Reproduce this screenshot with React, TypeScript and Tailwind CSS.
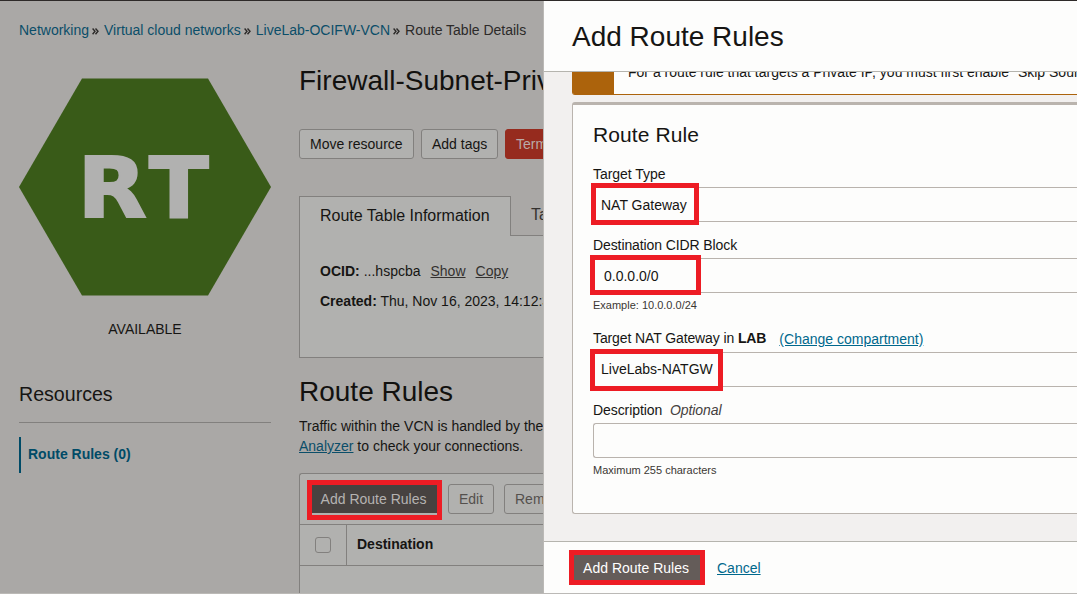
import type { ReactNode } from "react";

function Highlight({ className }: { className: string }) {
  return <span className={`pointer-events-none absolute border-[5px] border-[#ed1c24] ${className}`} />;
}

function Chevrons() {
  return (
    <svg className="ml-[3px] mr-[5px] mt-[2px] h-[7px] w-[7px]" viewBox="0 0 7 7" fill="none" stroke="#2c2a29" strokeWidth="1.4">
      <path d="M0.6 0.5L3 3.3L0.6 6.3M3.5 0.5L6 3.3L3.5 6.3" />
    </svg>
  );
}

function Breadcrumbs() {
  return (
    <nav className="flex h-5 items-center pl-[19px] text-[#0b4e69]">
      <a>Networking</a>
      <Chevrons />
      <a>Virtual cloud networks</a>
      <Chevrons />
      <a>LiveLab-OCIFW-VCN</a>
      <Chevrons />
      <span className="text-[#2c2a29]">Route Table Details</span>
    </nav>
  );
}

function Sidebar() {
  return (
    <aside className="w-[252px] shrink-0 pt-[38px]">
      <svg className="block h-[218px] w-[252px]" viewBox="0 0 252 218">
        <polygon points="63,0.5 189,0.5 252,109 189,217.5 63,217.5 0,109" fill="#395b18" />
        <g fontFamily="DejaVu Sans" fontWeight="700" fontSize="84" fill="#b1b1b0" stroke="#b1b1b0" strokeWidth="2">
          <text transform="translate(58.4 139) scale(1.07 1)">R</text>
          <text transform="translate(129.9 139) scale(1.04 1)">T</text>
        </g>
      </svg>
      <div className="mt-[23px] text-center text-[#161513]">AVAILABLE</div>
      <h3 className="mt-[41px] text-[19.6px] leading-7 text-[#161513]">Resources</h3>
      <div className="mt-[14px] h-px bg-[#82807e]" />
      <div className="mt-[14px] flex h-9 items-center border-l-2 border-[#004b67] pb-[2px] pl-[7px] font-bold text-[#004b67]">
        Route Rules (0)
      </div>
    </aside>
  );
}

function PageButton({ className, children }: { className: string; children: ReactNode }) {
  return (
    <button className={`flex h-[30px] shrink-0 items-center rounded-[3px] border pl-[10px] ${className}`}>{children}</button>
  );
}

function Details() {
  return (
    <main className="min-w-0 flex-1 overflow-hidden whitespace-nowrap">
      <h1 className="mt-[23px] text-[28px] leading-9 text-[#12110f]">Firewall-Subnet-Private</h1>
      <div className="mt-[30px] flex gap-[7px]">
        <PageButton className="w-[115px] border-[#82807e] bg-[#b1b1af]">Move resource</PageButton>
        <PageButton className="w-[77px] border-[#82807e] bg-[#b1b1af] pl-[9px]">Add tags</PageButton>
        <PageButton className="w-[90px] border-[#962b1e] bg-[#962b1e] text-[#b9aaa8]">Terminate</PageButton>
      </div>
      <div className="mt-[37px] flex h-10 text-base">
        <div className="w-[212px] shrink-0 border-l border-r border-t border-[#82807e] bg-[#b1b1af] pl-5 pt-[9px] leading-5">
          Route Table Information
        </div>
        <div className="flex-1 border-b border-[#82807e] pl-5 pt-[9px] leading-5 text-[#34312f]">Tags</div>
      </div>
      <div className="h-[122px] border-b border-l border-[#82807e] bg-[#b1b1af] pl-5 pt-[25px]">
        <div className="flex">
          <b className="mr-1">OCID:</b>...hspcba
          <a className="ml-[10px] text-[#34312f] underline">Show</a>
          <a className="ml-[10px] text-[#34312f] underline">Copy</a>
        </div>
        <div className="mt-[10px]">
          <b>Created:</b> Thu, Nov 16, 2023, 14:12:35 UTC
        </div>
      </div>
      <h2 className="mt-[16px] text-[28px] leading-9 text-[#12110f]">Route Rules</h2>
      <p className="mt-[6px]">
        Traffic within the VCN is handled by the
        <br />
        <a className="text-[#0b4e69] underline">Analyzer</a> to check your connections.
      </p>
      <div className="mt-[17px] rounded-tl-[3px] border-l border-t border-[#82807e] bg-[#b1b1af]">
        <div className="flex h-[50px] pl-3 pt-[10px]">
          <div className="relative h-[30px] w-[125px] shrink-0">
            <button className="h-[30px] w-[125px] border-b border-[#b1b1af] bg-[#474240] pr-[2px] text-[#b5b3b2]">Add Route Rules</button>
            <Highlight className="-left-[5px] -top-[4px] h-[40px] w-[135px]" />
          </div>
          <PageButton className="ml-[11px] w-[46px] border-[#82807e] text-[#54504d]">Edit</PageButton>
          <PageButton className="ml-[10px] w-[76px] border-[#82807e] text-[#54504d]">Remove</PageButton>
        </div>
        <div className="flex h-[42px] border-y border-[#82807e]">
          <div className="flex w-[47px] shrink-0 items-center border-r border-[#82807e] pl-[15px]">
            <span className="h-4 w-4 rounded-[3px] border border-[#82807e]" />
          </div>
          <b className="pl-[10px] pt-[9px]">Destination</b>
        </div>
        <div className="h-10" />
      </div>
    </main>
  );
}

function Field({ className, children }: { className: string; children?: ReactNode }) {
  return (
    <div className={`relative flex h-[35px] items-center rounded-l-[3px] border border-r-0 border-[#b9b3ad] ${className}`}>{children}</div>
  );
}

function Drawer() {
  return (
    <section className="flex min-w-0 flex-1 flex-col overflow-hidden whitespace-nowrap border-l border-[#bbb9b6] bg-[#f2f0ef] text-[#161513]">
      <header className="h-[71px] shrink-0 border-b border-[#b5b4ae] bg-[#fdfdfc] pl-7 pt-[18px] text-[28px] leading-9">
        Add Route Rules
      </header>
      <div className="flex min-h-0 flex-1 flex-col overflow-hidden pl-7">
        <div className="flex h-[23px] shrink-0 overflow-hidden rounded-bl-[3px] border-b border-[#ac630c] bg-[#fdfdfc]">
          <div className="h-[23px] w-[42px] shrink-0 bg-[#ac630c]" />
          <div className="-mt-[10px] ml-[14px]">For a route rule that targets a Private IP, you must first enable "Skip Source/Destination Check"</div>
        </div>
        <div className="mt-[7px] h-[412px] shrink-0 rounded-l-[3px] border-b border-l border-t-[3px] border-[#bab4ae] bg-[#fdfdfc] pl-5">
          <h2 className="mt-[16px] text-[21px] leading-7 tracking-[0.1px]">Route Rule</h2>
          <label className="mt-[15px] block tracking-[-0.04px]">Target Type</label>
          <Field className="mt-[3px] pl-[7px]">
            NAT Gateway
            <Highlight className="-left-[3px] -top-[5px] h-[42px] w-[108px]" />
          </Field>
          <label className="mt-[13px] block tracking-[-0.1px]">Destination CIDR Block</label>
          <Field className="mt-[3px] pl-[10px]">
            0.0.0.0/0
            <Highlight className="-left-[4px] -top-[4px] h-[40px] w-[111px]" />
          </Field>
          <div className="mt-[4px] text-[11px] leading-4 text-[#3b3733]">Example: 10.0.0.0/24</div>
          <div className="mt-[15px] flex h-5">
            <span className="tracking-[-0.11px]">
              Target NAT Gateway in <b>LAB</b>
            </span>
            <a className="ml-[13px] mt-px text-[#00688c] underline">(Change compartment)</a>
          </div>
          <Field className="mt-[4px] pl-[7px]">
            <span className="-mt-px">LiveLabs-NATGW</span>
            <Highlight className="-left-[4px] -top-[4px] h-[42px] w-[133px]" />
          </Field>
          <label className="mt-[13px] block tracking-[-0.08px]">
            Description <i className="ml-1 text-[#45413e]">Optional</i>
          </label>
          <Field className="mt-[3px]" />
          <div className="mt-[4px] text-[11px] leading-4 text-[#3b3733]">Maximum 255 characters</div>
        </div>
      </div>
      <footer className="flex h-[52px] shrink-0 items-center border-t border-[#b5b4ae] bg-[#fdfdfc] pl-[30px]">
        <div className="relative h-[25px] w-[126px]">
          <button className="h-[25px] w-[126px] bg-[#645c59] pr-[2px] text-white">Add Route Rules</button>
          <Highlight className="-left-[5px] -top-[5px] h-[35px] w-[136px]" />
        </div>
        <a className="ml-[17px] text-[#00688c] underline">Cancel</a>
      </footer>
    </section>
  );
}

export default function App() {
  return (
    <div className="flex h-[595px] w-[1077px] flex-col overflow-hidden border-t border-[#2e2a29] bg-white font-['Liberation_Sans',Arial,sans-serif] text-[14px] leading-5">
      <div className="flex h-[592px] shrink-0">
        <div className="w-[543px] shrink-0 overflow-hidden bg-[#aaa8a6] pt-[19px] text-[#161513]">
          <Breadcrumbs />
          <div className="flex gap-7 pl-[19px]">
            <Sidebar />
            <Details />
          </div>
        </div>
        <Drawer />
      </div>
      <div className="h-px shrink-0 bg-[#bbb9b6]" />
    </div>
  );
}
